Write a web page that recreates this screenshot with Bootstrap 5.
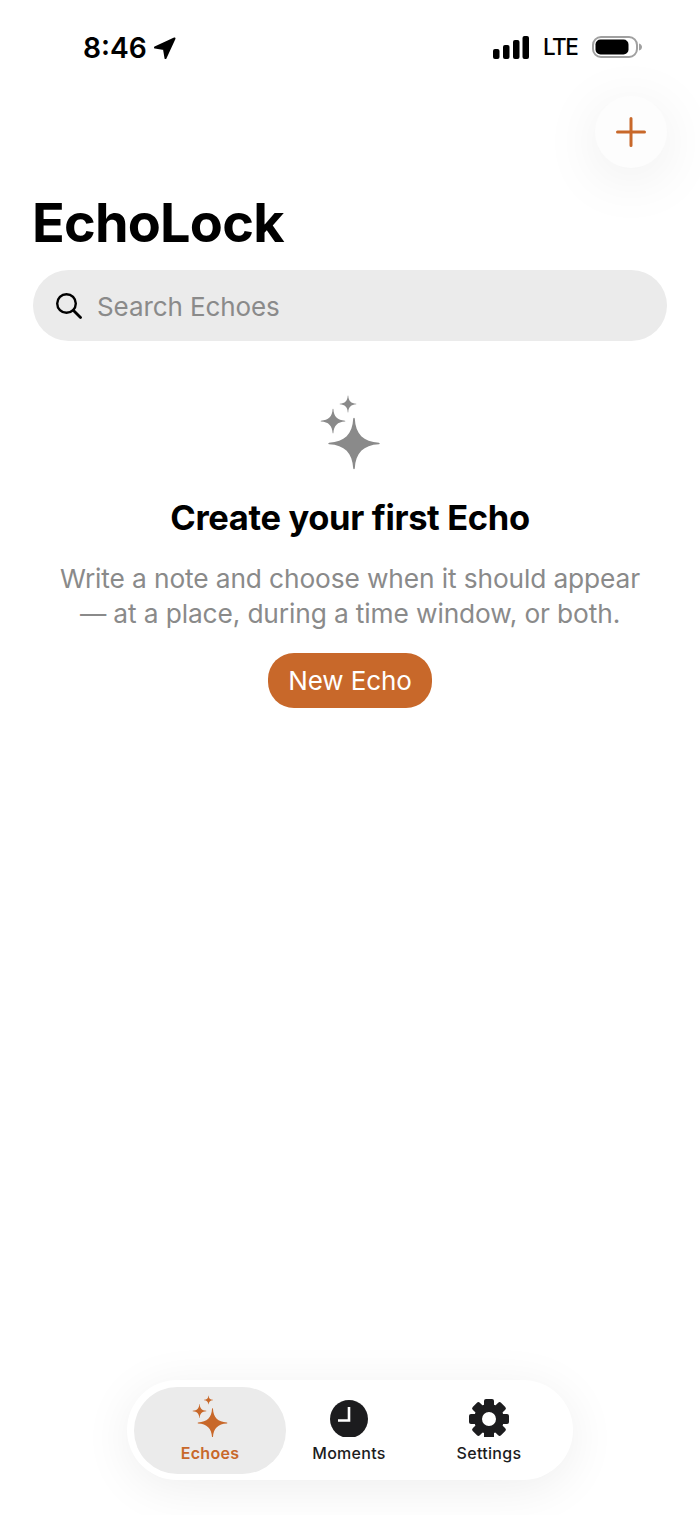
<!DOCTYPE html>
<html lang="en">
<head>
<meta charset="utf-8">
<title>EchoLock</title>
<link href="https://cdn.jsdelivr.net/npm/bootstrap@5.3.0/dist/css/bootstrap.min.css" rel="stylesheet">
<style>
html,body{margin:0;background:#fff;}
body{font-family:Inter,"Liberation Sans",sans-serif;color:#000;}
.phone{width:700px;height:1515px;overflow:hidden;}
.statusbar{height:96px;padding:35px 58px 0 84px;align-items:flex-start;}
.clock-time{font-size:28.200px;font-weight:600;line-height:26px;}
.status-left{gap:6px;margin-left:-1px;}
.status-right{margin-top:-1px;}
.lte{font-size:22.500px;font-weight:500;line-height:26px;margin:0 13px 0 14px;width:35px;letter-spacing:-1.500px;white-space:nowrap;}
.plus-row{padding-right:33px;height:72px;}
.plus-btn{width:72px;height:72px;border-radius:50%;background:#fdfdfd;border:0;box-shadow:0 10px 60px rgba(0,0,0,.08);padding:0;}
.app-title{font-size:54px;font-weight:700;line-height:64px;letter-spacing:-.8px;margin:23px 0 15px 32px;}
.searchbar{margin:0 33px;height:71px;border-radius:36px;background:#ebebeb;padding-left:22px;gap:15px;}
.search-text{font-size:26px;color:#8a8a8a;letter-spacing:-.1px;padding-top:2px;}
.empty-state{padding-top:54px;}
.empty-title{font-size:34.500px;font-weight:700;line-height:44px;letter-spacing:-.35px;margin:25px 0 21px;}
.empty-copy{font-size:26.300px;line-height:35px;color:#8a8a8a;margin:0 0 22px;letter-spacing:-.12px;}
.new-echo{background:#c8682a;color:#fff;font-size:26px;line-height:33px;height:55px;width:164px;border-radius:26px;border:0;padding:0;letter-spacing:-.1px;}
.tabbar-wrap{margin-top:auto;padding-bottom:35px;}
.tabbar{width:446px;height:100px;border-radius:50px;background:#fff;padding:7px;box-shadow:0 8px 50px rgba(0,0,0,.07);}
.tab-item{width:152px;height:87px;border-radius:44px;color:#1c1c1e;font-size:16px;font-weight:500;line-height:20px;letter-spacing:.3px;padding-bottom:11px;}
.tab-active{background:#ebebeb;color:#c8682a;font-weight:600;}
.tab-moments{width:126px;}
.tab-settings{width:154px;}
.tab-icon{height:42px;width:44px;margin-bottom:6px;display:block;}
</style>
</head>
<body>
<svg width="0" height="0" class="position-absolute">
<defs>
<path id="star" d="M.03-.96C.06-.36.36-.06.96-.03Q1.020 0 .96.03C.36.06.06.36.03.96Q0 1.020-.03.96C-.06.36-.36.06-.96.03Q-1.020 0-.96-.03C-.36-.06-.06-.36-.03-.96Q0-1.020.03-.96Z"/>
</defs>
</svg>
<div class="phone d-flex flex-column">
  <div class="statusbar d-flex justify-content-between">
    <div class="status-left d-flex align-items-center">
      <span class="clock-time">8:46</span>
      <svg width="24" height="24" viewBox="0 0 24 24"><path d="M21.500 2.500 2 11.500 11 13 12.500 22Z" fill="#000" stroke="#000" stroke-width="2" stroke-linejoin="round"/></svg>
    </div>
    <div class="status-right d-flex align-items-center">
      <svg width="36" height="23" viewBox="0 0 36 23"><rect x="0" y="13" width="6.500" height="10" rx="2"/><rect x="10" y="9" width="6.500" height="14" rx="2"/><rect x="20" y="4" width="6.500" height="19" rx="2"/><rect x="29.500" y="0" width="6.500" height="23" rx="2"/></svg>
      <span class="lte">LTE</span>
      <svg width="51" height="24" viewBox="0 0 51 24"><rect x="2" y="2" width="44" height="20" rx="8" fill="none" stroke="#a0a0a0" stroke-width="2"/><rect x="4.500" y="4.500" width="33" height="15" rx="5" fill="#000"/><path d="M48 8.500c2 .5 3 2 3 3.500s-1 3-3 3.500Z" fill="#a0a0a0"/></svg>
    </div>
  </div>
  <div class="plus-row d-flex justify-content-end">
    <button class="plus-btn d-flex align-items-center justify-content-center" type="button" aria-label="Add">
      <svg width="30" height="30" viewBox="0 0 30 30"><path d="M15 1.500v27M1.500 15h27" stroke="#c8682a" stroke-width="3" stroke-linecap="round"/></svg>
    </button>
  </div>
  <h1 class="app-title">EchoLock</h1>
  <div class="searchbar d-flex align-items-center">
    <svg width="27" height="27" viewBox="0 0 27 27"><circle cx="11.500" cy="11.500" r="9.300" fill="none" stroke="#000" stroke-width="2.400"/><path d="m18.500 18.500 7 7" stroke="#000" stroke-width="2.800" stroke-linecap="round"/></svg>
    <span class="search-text">Search Echoes</span>
  </div>
  <div class="empty-state d-flex flex-column align-items-center text-center">
    <svg width="60" height="76" viewBox="0 0 60 76" fill="#8a8a8a">
      <use href="#star" transform="translate(34 48.500) scale(26)"/>
      <use href="#star" transform="translate(13 26) scale(12.500)"/>
      <use href="#star" transform="translate(28 9) scale(8.500)"/>
    </svg>
    <h2 class="empty-title">Create your first Echo</h2>
    <p class="empty-copy">Write a note and choose when it should appear<br>— at a place, during a time window, or both.</p>
    <button class="new-echo" type="button">New Echo</button>
  </div>
  <div class="tabbar-wrap d-flex justify-content-center">
    <div class="tabbar d-flex align-items-stretch">
      <div class="tab-item tab-active d-flex flex-column align-items-center justify-content-end">
        <svg class="tab-icon" viewBox="0 0 44 42" fill="#c8682a">
          <use href="#star" transform="translate(24.500 28) scale(15)"/>
          <use href="#star" transform="translate(11.500 16) scale(7)"/>
          <use href="#star" transform="translate(20.500 5) scale(4.500)"/>
        </svg>
        <span>Echoes</span>
      </div>
      <div class="tab-item tab-moments d-flex flex-column align-items-center justify-content-end">
        <svg class="tab-icon" viewBox="0 0 44 42">
          <circle cx="22" cy="24" r="19" fill="#1c1c1e"/>
          <path d="M22 12v13.500H11" fill="none" stroke="#fff" stroke-width="2.600"/>
        </svg>
        <span>Moments</span>
      </div>
      <div class="tab-item tab-settings d-flex flex-column align-items-center justify-content-end">
        <svg class="tab-icon" viewBox="0 0 44 42" fill="#1c1c1e">
          <g transform="translate(22 24)">
            <circle r="11" fill="none" stroke="#1c1c1e" stroke-width="8"/>
            <g id="teeth"><rect x="-5" y="-20" width="10" height="9" rx="2"/><rect x="-5" y="11" width="10" height="9" rx="2"/></g>
            <use href="#teeth" transform="rotate(45)"/>
            <use href="#teeth" transform="rotate(90)"/>
            <use href="#teeth" transform="rotate(135)"/>
          </g>
        </svg>
        <span>Settings</span>
      </div>
    </div>
  </div>
</div>
<script src="https://cdn.jsdelivr.net/npm/bootstrap@5.3.0/dist/js/bootstrap.bundle.min.js"></script>
</body>
</html>
